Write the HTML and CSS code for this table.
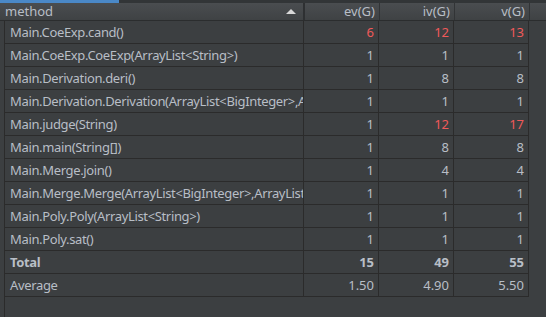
FILE: index.html
```html
<!DOCTYPE html>
<html>
<head>
<meta charset="utf-8">
<link rel="stylesheet" href="styles.css">
</head>
<body>
<div class="top"><div class="tab"></div></div>
<div class="panel">
  <div class="head">
    <div class="hc hm">method<span class="arrow"></span></div>
    <div class="hc num">ev(G)</div>
    <div class="hc num">iv(G)</div>
    <div class="hc num">v(G)</div>
    <div class="hc rest"></div>
  </div>
  <div class="body">
    <div class="grid">
      <div class="c m">Main.CoeExp.cand()</div><div class="c n red">6</div><div class="c n red">12</div><div class="c n red">13</div>
      <div class="c m">Main.CoeExp.CoeExp(ArrayList&lt;String&gt;)</div><div class="c n">1</div><div class="c n">1</div><div class="c n">1</div>
      <div class="c m">Main.Derivation.deri()</div><div class="c n">1</div><div class="c n">8</div><div class="c n">8</div>
      <div class="c m">Main.Derivation.Derivation(ArrayList&lt;BigInteger&gt;,ArrayList&lt;String&gt;)</div><div class="c n">1</div><div class="c n">1</div><div class="c n">1</div>
      <div class="c m">Main.judge(String)</div><div class="c n">1</div><div class="c n red">12</div><div class="c n red">17</div>
      <div class="c m">Main.main(String[])</div><div class="c n">1</div><div class="c n">8</div><div class="c n">8</div>
      <div class="c m">Main.Merge.join()</div><div class="c n">1</div><div class="c n">4</div><div class="c n">4</div>
      <div class="c m">Main.Merge.Merge(ArrayList&lt;BigInteger&gt;,ArrayList&lt;String&gt;)</div><div class="c n">1</div><div class="c n">1</div><div class="c n">1</div>
      <div class="c m">Main.Poly.Poly(ArrayList&lt;String&gt;)</div><div class="c n">1</div><div class="c n">1</div><div class="c n">1</div>
      <div class="c m">Main.Poly.sat()</div><div class="c n">1</div><div class="c n">1</div><div class="c n">1</div>
      <div class="c m b">Total</div><div class="c n b">15</div><div class="c n b">49</div><div class="c n b">55</div>
      <div class="c m">Average</div><div class="c n">1.50</div><div class="c n">4.90</div><div class="c n">5.50</div>
    </div>
  </div>
</div>
</body>
</html>
```
FILE: styles.css
```css
html, body {
  margin: 0;
  padding: 0;
  background: #3c3f41;
  width: 546px;
  height: 317px;
  overflow: hidden;
  font-family: "Noto Sans", "Open Sans", sans-serif;
  font-size: 12.4px;
  color: #b8bec6;
}
.top {
  height: 3px;
  background: #323537;
}
.tab {
  width: 119px;
  height: 3px;
  background: #4a88c7;
}
.head {
  display: flex;
  height: 17px;
  background: linear-gradient(#4a4d50, #3f4244);
  border-bottom: 1px solid #2b2d2e;
  font-size: 13px;
}
.hc {
  box-sizing: border-box;
  height: 17px;
  line-height: 16px;
  border-right: 1px solid #323436;
  white-space: nowrap;
}
.hm {
  width: 305px;
  padding-left: 5px;
  position: relative;
  border-right: 2px solid #2e3032;
}
.arrow {
  position: absolute;
  right: 7px;
  top: 6px;
  width: 0;
  height: 0;
  border-left: 5px solid transparent;
  border-right: 5px solid transparent;
  border-bottom: 5px solid #d8d8d8;
}
.num {
  width: 75px;
  text-align: right;
  padding-right: 4px;
}
.rest {
  flex: 1;
  border-right: none;
}
.body {
  border-left: 1px solid #2b2b2b;
  margin-left: 4px;
  height: 297px;
}
.grid {
  display: grid;
  grid-template-columns: 299px 75px 75px 75px;
  grid-auto-rows: 23px;
  width: 524px;
}
.c {
  box-sizing: border-box;
  border-right: 1px solid #2b2b2b;
  border-bottom: 1px solid #2b2b2b;
  line-height: 22px;
  white-space: nowrap;
  overflow: hidden;
  text-overflow: clip;
  min-width: 0;
}
.m {
  padding-left: 5px;
  font-size: 13px;
  letter-spacing: -0.35px;
}
.n {
  text-align: right;
  padding-right: 4px;
  font-size: 13px;
}
.red {
  color: #f05a5a;
}
.b {
  font-weight: bold;
}
```
